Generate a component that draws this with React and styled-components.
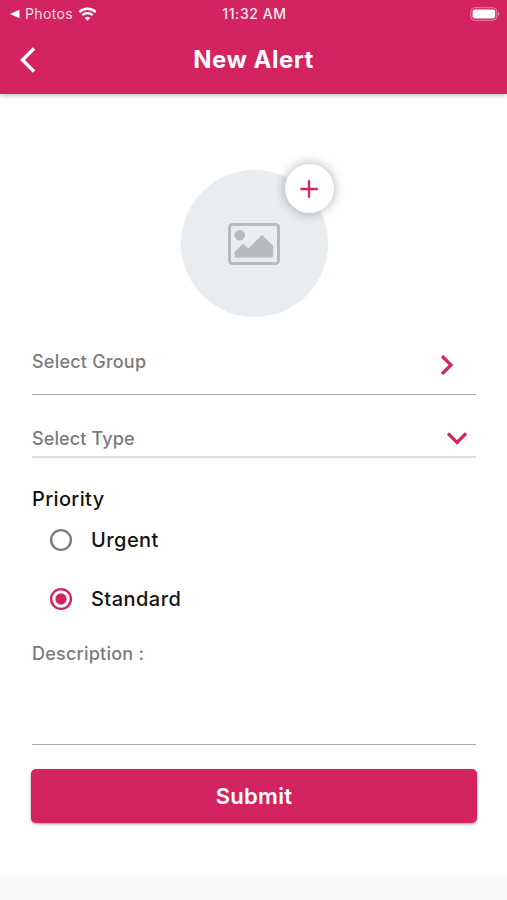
import React, { useState } from 'react';
import styled, { createGlobalStyle } from 'styled-components';

const GlobalStyle = createGlobalStyle`
  * {
    box-sizing: border-box;
  }

  body {
    margin: 0;
    background-color: #fafafa;
    font-family: Inter, 'Liberation Sans', sans-serif;
  }
`;

const Screen = styled.div`
  display: flex;
  flex-direction: column;
  height: 900px;
  overflow: hidden;
`;

const TopBar = styled.header`
  position: relative;
  height: 94px;
  flex-shrink: 0;
  background-color: #d32360;
  color: #fff;
  box-shadow: 0 1px 5px rgba(0, 0, 0, 0.3);
`;

const StatusBar = styled.div`
  display: grid;
  grid-template-columns: 1fr auto 1fr;
  align-items: center;
  height: 28px;
  padding: 0 7px 0 10px;
`;

const StatusLeft = styled.div`
  display: flex;
  align-items: center;
`;

const BackToApp = styled.span`
  margin: 0 5px 0 5px;
  font-size: 14px;
  line-height: 28px;
  letter-spacing: 0.35px;
  color: #fbdfe8;
`;

const Time = styled.span`
  margin-right: 1px;
  font-size: 14px;
  font-weight: 500;
  line-height: 28px;
  letter-spacing: 0.6px;
  color: #fdeaf0;
`;

const StatusRight = styled.div`
  display: flex;
  justify-content: flex-end;
`;

const NavBar = styled.div`
  display: grid;
  grid-template-columns: 60px 1fr 60px;
  align-items: center;
  height: 64px;
`;

const BackButton = styled.button`
  display: flex;
  padding: 0 0 0 19px;
  border: none;
  background: none;
  color: #fff;
`;

const Title = styled.h1`
  margin: 0;
  text-align: center;
  font-size: 24px;
  font-weight: 700;
  line-height: 30px;
  letter-spacing: 0.5px;
`;

const Form = styled.main`
  display: flex;
  flex-direction: column;
  height: 782px;
  padding: 76px 31px 0 32px;
  background-color: #fff;
`;

const Avatar = styled.div`
  position: relative;
  display: flex;
  align-items: center;
  justify-content: center;
  align-self: center;
  width: 147px;
  height: 147px;
  margin: 0.4px 0 -0.4px;
  border-radius: 50%;
  background-color: #e9edf0;
`;

const AddButton = styled.button`
  position: absolute;
  top: -6px;
  right: -6px;
  display: flex;
  align-items: center;
  justify-content: center;
  width: 49px;
  height: 49px;
  padding: 0;
  border: none;
  border-radius: 50%;
  background-color: #fff;
  box-shadow: 0 0 12px rgba(0, 0, 0, 0.32);
`;

const Field = styled.div`
  display: flex;
  justify-content: space-between;
  height: ${(props) => props.$height}px;
  padding-top: ${(props) => props.$top}px;
  border-bottom: ${(props) => props.$line};
`;

const Label = styled.span`
  font-size: 18px;
  font-weight: 500;
  line-height: 24px;
  letter-spacing: ${(props) => props.$spacing || '0.23px'};
  color: #7b7b7b;
`;

const FieldIcon = styled.span`
  display: flex;
  align-items: center;
  height: 24px;
  margin: ${(props) => props.$margin};
`;

const GroupTitle = styled.h2`
  margin: 28px 0 0;
  font-size: 20px;
  font-weight: 500;
  line-height: 26px;
  letter-spacing: 0.35px;
  color: #141414;
`;

const Options = styled.div`
  display: flex;
  flex-direction: column;
  margin-top: -2px;
`;

const Option = styled.button`
  display: flex;
  align-items: center;
  gap: 18px;
  height: 59px;
  padding: 0 0 0 17px;
  border: none;
  background: none;
  font-family: inherit;
  font-size: 20px;
  font-weight: 500;
  letter-spacing: 0.45px;
  color: #141414;
`;

const SubmitButton = styled.button`
  height: 54px;
  margin: 24px -0.6px 0;
  border: none;
  border-radius: 5px;
  background-color: #d32360;
  box-shadow: 0 1px 3px rgba(0, 0, 0, 0.4);
  color: #fff;
  font-family: inherit;
  font-size: 22px;
  font-weight: 600;
  letter-spacing: 0.3px;
`;

const BackTriangle = () => (
  <svg width="10" height="10" viewBox="0 0 10 10">
    <path d="M0 5L9.5 0.8V9.2Z" fill="#fff" />
  </svg>
);

const WifiIcon = () => (
  <svg width="19" height="14" viewBox="0 0 18 14" fill="none" stroke="#fff" strokeWidth="2.4">
    <path d="M0.9 5.1C5.4 0.6 12.6 0.6 17.1 5.1" />
    <path d="M3.9 8.2C6.7 5.4 11.3 5.4 14.1 8.2" />
    <path d="M9 13.8L6.2 10.9C7.7 9.4 10.3 9.4 11.8 10.9Z" fill="#fff" stroke="none" />
  </svg>
);

const BatteryIcon = () => (
  <svg width="30" height="14" viewBox="0 0 30 14">
    <rect x="0.8" y="0.7" width="26" height="12.6" rx="3.8" fill="none" stroke="#fff" strokeOpacity="0.45" />
    <rect x="2.6" y="2.4" width="22.6" height="9.2" rx="2" fill="#fff" />
    <path d="M28 4.8C29.7 5.6 29.7 8.4 28 9.2Z" fill="#fff" fillOpacity="0.5" />
  </svg>
);

const ImageIcon = () => (
  <svg width="52" height="42" viewBox="0 0 52 42">
    <rect x="1.5" y="1.5" width="49" height="39" rx="3" fill="none" stroke="#b5bbbe" strokeWidth="3" />
    <circle cx="11.7" cy="12.3" r="5.3" fill="#b5bbbe" />
    <path d="M6.5 34.5V29L15.2 20.8L20.5 25.6L34 11.7L45.2 22.9V34.5Z" fill="#b5bbbe" />
  </svg>
);

const Chevron = ({ width, height, points, color = '#d32360', stroke = 3.2 }) => (
  <svg width={width} height={height} viewBox={`0 0 ${width} ${height}`}>
    <polyline points={points} fill="none" stroke={color} strokeWidth={stroke} />
  </svg>
);

const RadioIcon = ({ checked }) => (
  <svg width="24" height="24" viewBox="0 0 24 24">
    <circle cx="12" cy="12" r="9.9" fill="none" stroke={checked ? '#d32360' : '#7b7b7b'} strokeWidth="2.4" />
    {checked && <circle cx="12" cy="12" r="5.7" fill="#d32360" />}
  </svg>
);

const priorities = ['Urgent', 'Standard'];

function App() {
  const [priority, setPriority] = useState('Standard');

  return (
    <Screen>
      <GlobalStyle />
      <TopBar>
        <StatusBar>
          <StatusLeft>
            <BackTriangle />
            <BackToApp>Photos</BackToApp>
            <WifiIcon />
          </StatusLeft>
          <Time>11:32 AM</Time>
          <StatusRight>
            <BatteryIcon />
          </StatusRight>
        </StatusBar>
        <NavBar>
          <BackButton aria-label="Back">
            <Chevron width={18} height={26} points="15,1.5 3.5,13 15,24.5" color="#fff" stroke={3.4} />
          </BackButton>
          <Title>New Alert</Title>
        </NavBar>
      </TopBar>

      <Form>
        <Avatar>
          <ImageIcon />
          <AddButton aria-label="Add photo">
            <svg width="18" height="18" viewBox="0 0 18 18">
              <path d="M9 0.3V17.7M0.3 9H17.7" stroke="#d32360" strokeWidth="2.3" />
            </svg>
          </AddButton>
        </Avatar>

        <Field $height={78} $top={33} $line="1px solid #a9a9a9">
          <Label>Select Group</Label>
          <FieldIcon $margin="3px 22px 0 0">
            <Chevron width={14} height={20} points="2,1 11,10 2,19" />
          </FieldIcon>
        </Field>
        <Field $height={63} $top={32} $line="2px solid #dedede">
          <Label $spacing="0.12px">Select Type</Label>
          <FieldIcon $margin="-1px 9px 0 0">
            <Chevron width={20} height={14} points="1,2.5 10,11.5 19,2.5" />
          </FieldIcon>
        </Field>

        <GroupTitle>Priority</GroupTitle>
        <Options>
          {priorities.map((name) => (
            <Option key={name} onClick={() => setPriority(name)}>
              <RadioIcon checked={priority === name} />
              {name}
            </Option>
          ))}
        </Options>

        <Field $height={117} $top={14} $line="1px solid #a9a9a9">
          <Label>Description :</Label>
        </Field>
        <SubmitButton>Submit</SubmitButton>
      </Form>
    </Screen>
  );
}

export default App;
